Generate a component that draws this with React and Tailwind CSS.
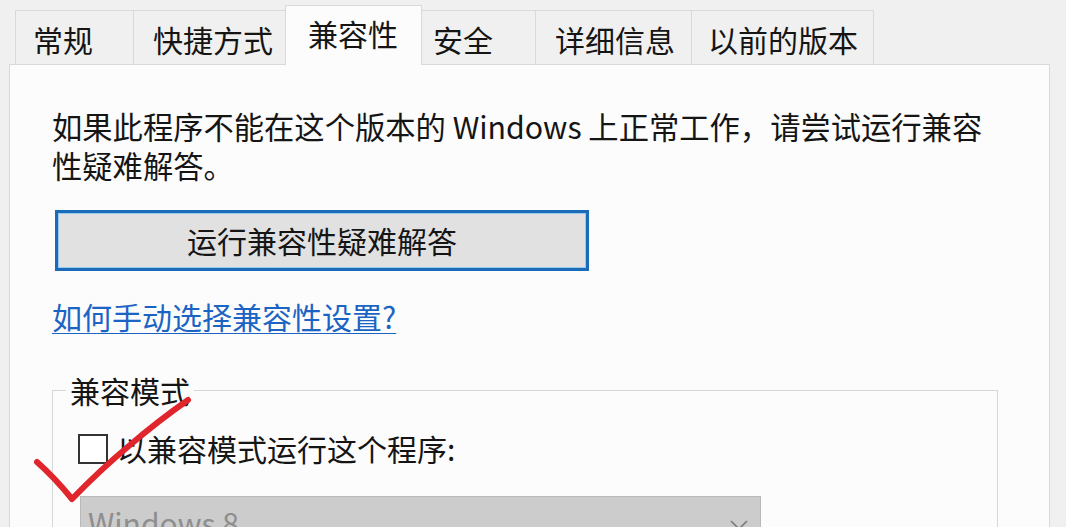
import React from "react";

const tabs = [
  { label: "常规", w: "w-[119px]", pl: "pl-[17px]" },
  { label: "快捷方式", w: "w-[153px]", pl: "pl-[19px]" },
  { label: "兼容性", w: "w-[137px]", pl: "pl-[22px]", active: true },
  { label: "安全", w: "w-[115px]", pl: "pl-[11px]" },
  { label: "详细信息", w: "w-[157px]", pl: "pl-[19px]" },
  { label: "以前的版本", w: "w-[183px]", pl: "pl-[16px]" },
];

export default function App() {
  return (
    <div
      className="relative w-[1066px] h-[527px] overflow-hidden bg-[#f0f0f0] text-[#151515]"
      style={{ fontFamily: '"Noto Sans CJK SC", "Noto Sans", sans-serif' }}
    >
      <div className="pt-[5px] pl-[9px]">
        {/* tab strip */}
        <div className="relative z-10 -mb-px flex items-end pl-[6px]">
          {tabs.map((t, i) => (
            <div
              key={t.label}
              className={
                (t.active
                  ? "relative z-10 h-[60px] bg-[#fcfcfc] pt-[12px] "
                  : "h-[54px] mb-px bg-[#f0f0f0] pt-[13px] ") +
                (i > 0 ? "-ml-px " : "") +
                "shrink-0 border-l border-r border-t border-[#d9d9d9] text-[30px] leading-[30px] " +
                t.w +
                " " +
                t.pl
              }
            >
              {t.label}
            </div>
          ))}
        </div>

        {/* panel */}
        <div className="w-[1041px] h-[500px] border border-[#d9d9d9] bg-[#fcfcfc] px-[42px] pt-[42px]">
          <p className="w-[945px] text-[30.3px] leading-[39px]">
            如果此程序不能在这个版本的 Windows 上正常工作，请尝试运行兼容性疑难解答。
          </p>

          <button className="mt-[25px] ml-[3px] flex h-[61px] w-[534px] items-center justify-center border-[3px] border-[#1b6cb8] bg-[#e1e1e1] text-[30px] leading-[39px] shadow-[inset_0_0_0_1px_#9cc7ee]">
            运行兼容性疑难解答
          </button>

          <div className="mt-[26px] text-[30px] leading-[39px]">
            <a className="text-[#1c64c4] underline decoration-1 underline-offset-[4px]">
              如何手动选择兼容性设置?
            </a>
          </div>

          <fieldset className="mt-[35px] w-[946px] border border-[#d7d7d7] pb-[40px]">
            <legend className="ml-[13px] px-[4px] text-[30px] leading-[39px]">兼容模式</legend>
            <div className="mt-[19px] flex items-center pl-[25px]">
              <div className="h-[30px] w-[30px] shrink-0 border-2 border-[#333333] bg-white" />
              <span className="ml-[9px] text-[30px] leading-[39px]">以兼容模式运行这个程序:</span>
            </div>
            <div className="mt-[28px] ml-[27px] flex h-[60px] w-[681px] items-start justify-between border border-[#b9b9b9] bg-[#cccccc] pl-[7px] pr-[12px] pt-[6px]">
              <span className="text-[30px] leading-[39px] text-[#8e8e8e]">Windows 8</span>
              <svg className="mt-[17px]" width="18" height="10" viewBox="0 0 18 10">
                <path d="M1 1 L9 9 L17 1" fill="none" stroke="#7a7a7a" strokeWidth="1.6" />
              </svg>
            </div>
          </fieldset>
        </div>
      </div>

      {/* hand-drawn red check mark */}
      <svg
        className="pointer-events-none absolute left-0 top-0"
        width="1066"
        height="527"
        viewBox="0 0 1066 527"
      >
        <path
          d="M37 462 Q55 478 72 499 Q100 470 130 445 Q158 421 188 400"
          fill="none"
          stroke="#e0262c"
          strokeWidth="6"
          strokeLinecap="round"
          strokeLinejoin="round"
        />
      </svg>
    </div>
  );
}
